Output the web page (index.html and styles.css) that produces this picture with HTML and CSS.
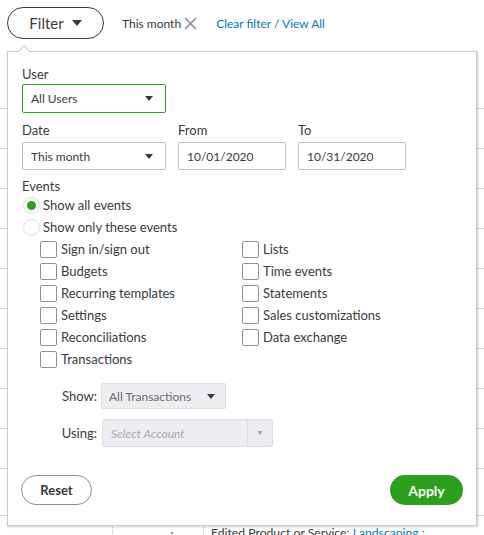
FILE: index.html
```html
<!DOCTYPE html>
<html>
<head>
<meta charset="utf-8">
<link rel="stylesheet" href="styles.css">
</head>
<body>
<div class="page">
  <div class="toolbar">
    <div class="filter-btn">Filter <span class="caret big"></span></div>
    <span class="chip">This month
      <svg class="x" width="13" height="13" viewBox="0 0 13 13"><path d="M1 1L12 12M12 1L1 12" stroke="#8d9096" stroke-width="1.6" fill="none"/></svg>
    </span>
    <a class="link">Clear filter / View All</a>
  </div>

  <div class="table">
    <div class="row"><div class="c1"></div><div class="c2"></div><div class="c3"></div></div>
    <div class="row"><div class="c1"></div><div class="c2"></div><div class="c3"></div></div>
    <div class="row"><div class="c1"></div><div class="c2"></div><div class="c3"></div></div>
    <div class="row"><div class="c1"></div><div class="c2"></div><div class="c3"></div></div>
    <div class="row"><div class="c1"></div><div class="c2"></div><div class="c3"></div></div>
    <div class="row"><div class="c1"></div><div class="c2"></div><div class="c3"></div></div>
    <div class="row"><div class="c1"></div><div class="c2"></div><div class="c3"></div></div>
    <div class="row"><div class="c1"></div><div class="c2"></div><div class="c3"></div></div>
    <div class="row"><div class="c1"></div><div class="c2"></div><div class="c3"></div></div>
    <div class="row"><div class="c1"></div><div class="c2"></div><div class="c3"></div></div>
    <div class="row tall"><div class="c1"></div><div class="c2"></div><div class="c3"></div></div>
    <div class="row last"><div class="c1"></div><div class="c2"><span class="dot"></span></div><div class="c3">Edited Product or Service: <a class="blue">Landscaping :</a></div></div>
  </div>

  <div class="popup">
    <div class="notch"></div>
    <div class="label">User</div>
    <div class="select user-select"><span>All Users</span><span class="caret"></span></div>

    <div class="date-row">
      <div class="field">
        <div class="label">Date</div>
        <div class="select date-select"><span>This month</span><span class="caret"></span></div>
      </div>
      <div class="field">
        <div class="label">From</div>
        <div class="input">10/01/2020</div>
      </div>
      <div class="field">
        <div class="label">To</div>
        <div class="input">10/31/2020</div>
      </div>
    </div>

    <div class="label events-label">Events</div>
    <div class="radio-row"><span class="radio checked"></span><span>Show all events</span></div>
    <div class="radio-row"><span class="radio"></span><span>Show only these events</span></div>

    <div class="checks">
      <div class="check"><span class="box"></span>Sign in/sign out</div>
      <div class="check"><span class="box"></span>Lists</div>
      <div class="check"><span class="box"></span>Budgets</div>
      <div class="check"><span class="box"></span>Time events</div>
      <div class="check"><span class="box"></span>Recurring templates</div>
      <div class="check"><span class="box"></span>Statements</div>
      <div class="check"><span class="box"></span>Settings</div>
      <div class="check"><span class="box"></span>Sales customizations</div>
      <div class="check"><span class="box"></span>Reconciliations</div>
      <div class="check"><span class="box"></span>Data exchange</div>
      <div class="check"><span class="box"></span>Transactions</div>
    </div>

    <div class="opt-row show-row">
      <span class="opt-label">Show:</span>
      <div class="dis-select show-select"><span class="dis-text">All Transactions</span><span class="dis-arrow"><span class="caret"></span></span></div>
    </div>
    <div class="opt-row using-row">
      <span class="opt-label">Using:</span>
      <div class="dis-select using-select"><span class="dis-text placeholder">Select Account</span><span class="dis-arrow sep"><span class="caret light"></span></span></div>
    </div>

    <div class="footer">
      <div class="btn reset">Reset</div>
      <div class="btn apply">Apply</div>
    </div>
  </div>
</div>
</body>
</html>
```
FILE: styles.css
```css
* { box-sizing: border-box; }
html, body { margin: 0; padding: 0; background: #fff; }
body {
  font-family: Lato, "Open Sans", Arial, sans-serif;
  color: #393a3d;
  font-size: 13px;
  width: 484px;
  height: 535px;
  overflow: hidden;
}
.page { position: relative; width: 484px; height: 535px; }

.toolbar {
  display: flex;
  align-items: center;
  padding: 7px 0 0 7px;
  height: 39px;
}
.filter-btn {
  width: 97px;
  height: 32px;
  border: 1px solid #393a3d;
  border-radius: 16px;
  display: flex;
  align-items: center;
  justify-content: center;
  gap: 8px;
  font-size: 15px;
  padding-right: 0;
}
.caret {
  display: inline-block;
  width: 0; height: 0;
  border-left: 4px solid transparent;
  border-right: 4px solid transparent;
  border-top: 5px solid #393a3d;
}
.caret.big { border-left-width: 5px; border-right-width: 5px; border-top-width: 6px; }
.caret.light { border-top-color: #a9acb2; border-left-width: 3.5px; border-right-width: 3.5px; border-top-width: 4px; }
.chip {
  margin-left: 18px;
  font-size: 12px;
  display: flex;
  align-items: center;
  gap: 3px;
  color: #393a3d;
}
.link { margin-left: 19px; font-size: 12px; color: #0077c5; }

.table { margin-top: 30px; }
.row {
  height: 40px;
  border-bottom: 1px solid #d4d7dc;
  display: grid;
  grid-template-columns: 112px 91px 1fr;
}
.row.tall { height: 47px; }
.row.last { border-bottom: none; height: 30px; }
.c2, .c3 { border-left: 1px dotted #b5b8bd; }
.c2 { position: relative; }
.dot { position: absolute; left: 58px; top: 16px; width: 2px; height: 2px; background: #8d9096; }
.c3 { padding: 9px 0 0 7px; font-size: 12.2px; line-height: 16px; white-space: nowrap; }
.blue { color: #0077c5; }

.popup {
  position: absolute;
  left: 7px;
  top: 51px;
  width: 470px;
  background: #fff;
  border: 1px solid #c9cbcf;
  box-shadow: 1px 1px 2px rgba(0,0,0,0.2);
  padding: 14px 13px 20px 14px;
}
.notch {
  position: absolute;
  left: 12px;
  top: -5px;
  width: 8px;
  height: 8px;
  background: #fff;
  border-top: 1px solid #c9cbcf;
  border-left: 1px solid #c9cbcf;
  transform: rotate(45deg);
}
.label { font-size: 13px; line-height: 16px; }

.select {
  display: flex;
  align-items: center;
  justify-content: space-between;
  border: 1px solid #babec5;
  border-radius: 2px;
  font-size: 12px;
  padding: 0 12px 0 8px;
}
.user-select {
  margin-top: 2px;
  width: 144px;
  height: 29px;
  border-color: #2ca01c;
}
.date-row { display: flex; gap: 12px; margin-top: 9px; }
.date-row .label { margin-bottom: 4px; }
.date-select { width: 144px; height: 28px; }
.input {
  width: 108px;
  height: 28px;
  border: 1px solid #babec5;
  border-radius: 2px;
  font-size: 12px;
  padding-left: 8px;
  display: flex;
  align-items: center;
}

.events-label { margin-top: 8px; }
.radio-row {
  height: 22px;
  display: flex;
  align-items: center;
  gap: 3px;
  padding-left: 1px;
  font-size: 13px;
}
.radio {
  width: 17px; height: 17px;
  border: 1px solid #dcdee2;
  border-radius: 50%;
  display: flex; align-items: center; justify-content: center;
}
.radio.checked::after {
  content: "";
  width: 9px; height: 9px;
  border-radius: 50%;
  background: #2ca01c;
}

.checks {
  display: grid;
  grid-template-columns: 202px auto;
  padding-left: 18px;
}
.check {
  height: 22px;
  display: flex;
  align-items: center;
  gap: 4px;
  font-size: 13px;
}
.box {
  width: 17px; height: 17px;
  border: 1px solid #8d9096;
  border-radius: 2px;
}

.opt-row { display: flex; align-items: center; }
.show-row { margin-top: 13px; }
.using-row { margin-top: 10px; }
.opt-label { width: 76px; text-align: right; padding-right: 1px; font-size: 13px; }
.dis-select {
  display: flex;
  align-items: stretch;
  background: #eceef1;
  border: 1px solid #dcdee2;
  border-radius: 2px;
  font-size: 12px;
}
.show-select { margin-left: 3px; width: 125px; height: 26px; }
.using-select { margin-left: 4px; width: 171px; height: 28px; }
.dis-text { flex: 1; display: flex; align-items: center; padding-left: 7px; color: #6b6c72; }
.dis-text.placeholder { color: #a9acb2; font-style: italic; padding-left: 8px; }
.dis-arrow { display: flex; align-items: center; justify-content: center; }
.show-select .dis-arrow { width: 28px; }
.using-select .dis-arrow { width: 25px; }
.dis-arrow.sep { border-left: 1px solid #dcdee2; }

.footer {
  margin-top: 28px;
  display: flex;
  justify-content: space-between;
  align-items: center;
}
.btn {
  height: 30px;
  border-radius: 15px;
  display: flex;
  align-items: center;
  justify-content: center;
  font-size: 13px;
}
.reset { width: 71px; border: 1px solid #8d9096; font-weight: 700; color: #393a3d; margin-left: -1px; }
.apply { width: 73px; background: #2ca01c; color: #fff; font-weight: 700; font-size: 14px; }
```
